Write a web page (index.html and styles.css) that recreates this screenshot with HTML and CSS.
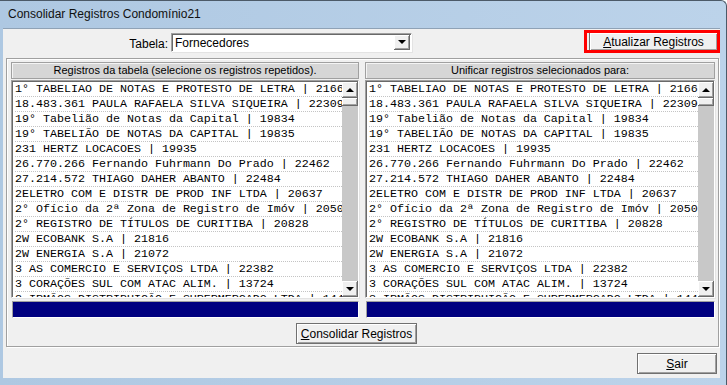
FILE: index.html
```html
<!DOCTYPE html>
<html lang="pt-BR">

<head>
    <meta charset="UTF-8">
    <title>Consolidar Registros Condomínio21</title>
    <link rel="stylesheet" href="styles.css">
</head>

<body>
    <div class="window">
        <div class="titlebar">Consolidar Registros Condomínio21</div>

        <div class="client">
            <!-- Table selection -->
            <div class="toolbar">
                <label class="field-label">Tabela:</label>
                <div class="combo">
                    <span class="combo-value">Fornecedores</span>
                    <span class="combo-btn"><span class="arrow-down"></span></span>
                </div>
                <button class="btn btn-refresh highlighted"><u>A</u>tualizar Registros</button>
            </div>

            <!-- Records -->
            <div class="group">
                <div class="panels">
                    <div class="panel">
                        <div class="panel-header">Registros da tabela (selecione os registros repetidos).</div>
                        <div class="listbox">
                            <ul class="rows">
                                <li>1° TABELIAO DE NOTAS E PROTESTO DE LETRA | 21668</li>
                                <li>18.483.361 PAULA RAFAELA SILVA SIQUEIRA | 22309</li>
                                <li>19° Tabelião de Notas da Capital | 19834</li>
                                <li>19° TABELIÃO DE NOTAS DA CAPITAL | 19835</li>
                                <li>231 HERTZ LOCACOES | 19935</li>
                                <li>26.770.266 Fernando Fuhrmann Do Prado | 22462</li>
                                <li>27.214.572 THIAGO DAHER ABANTO | 22484</li>
                                <li>2ELETRO COM E DISTR DE PROD INF LTDA | 20637</li>
                                <li>2° Ofício da 2ª Zona de Registro de Imóv | 20508</li>
                                <li>2° REGISTRO DE TÍTULOS DE CURITIBA | 20828</li>
                                <li>2W ECOBANK S.A | 21816</li>
                                <li>2W ENERGIA S.A | 21072</li>
                                <li>3 AS COMERCIO E SERVIÇOS LTDA | 22382</li>
                                <li>3 CORAÇÕES SUL COM ATAC ALIM. | 13724</li>
                                <li>3 IRMÃOS DISTRIBUIÇÃO E SUPERMERCADO LTDA | 14401</li>
                            </ul>
                            <div class="scrollbar">
                                <span class="sb-btn"><span class="arrow-up"></span></span>
                                <span class="sb-thumb"></span>
                                <span class="sb-track"></span>
                                <span class="sb-btn"><span class="arrow-down"></span></span>
                            </div>
                        </div>
                        <div class="progress"></div>
                    </div>

                    <div class="panel panel-right">
                        <div class="panel-header">Unificar registros selecionados para:</div>
                        <div class="listbox">
                            <ul class="rows">
                                <li>1° TABELIAO DE NOTAS E PROTESTO DE LETRA | 21668</li>
                                <li>18.483.361 PAULA RAFAELA SILVA SIQUEIRA | 22309</li>
                                <li>19° Tabelião de Notas da Capital | 19834</li>
                                <li>19° TABELIÃO DE NOTAS DA CAPITAL | 19835</li>
                                <li>231 HERTZ LOCACOES | 19935</li>
                                <li>26.770.266 Fernando Fuhrmann Do Prado | 22462</li>
                                <li>27.214.572 THIAGO DAHER ABANTO | 22484</li>
                                <li>2ELETRO COM E DISTR DE PROD INF LTDA | 20637</li>
                                <li>2° Ofício da 2ª Zona de Registro de Imóv | 20508</li>
                                <li>2° REGISTRO DE TÍTULOS DE CURITIBA | 20828</li>
                                <li>2W ECOBANK S.A | 21816</li>
                                <li>2W ENERGIA S.A | 21072</li>
                                <li>3 AS COMERCIO E SERVIÇOS LTDA | 22382</li>
                                <li>3 CORAÇÕES SUL COM ATAC ALIM. | 13724</li>
                                <li>3 IRMÃOS DISTRIBUIÇÃO E SUPERMERCADO LTDA | 14401</li>
                            </ul>
                            <div class="scrollbar">
                                <span class="sb-btn"><span class="arrow-up"></span></span>
                                <span class="sb-thumb"></span>
                                <span class="sb-track"></span>
                                <span class="sb-btn"><span class="arrow-down"></span></span>
                            </div>
                        </div>
                        <div class="progress"></div>
                    </div>
                </div>

                <div class="group-actions">
                    <button class="btn btn-consolidate"><u>C</u>onsolidar Registros</button>
                </div>
            </div>

            <!-- Footer -->
            <div class="footer">
                <button class="btn btn-exit"><u>S</u>air</button>
            </div>
        </div>
    </div>
</body>

</html>
```

FILE: styles.css
```css
/* Window frame */
body {
    margin: 0;
    font-family: "Liberation Sans", Arial, sans-serif;
    font-size: 12px;
    color: #000;
    background: #fff;
}

.window {
    width: 727px;
    height: 385px;
    display: flex;
    flex-direction: column;
    box-sizing: border-box;
    background: linear-gradient(to right, #aec8e2, #bcd3ea);
    border-top: 1px solid #4c5a68;
    border-right: 1px solid #4c5a68;
    border-top-right-radius: 6px;
    padding: 0 6px 7px 3px;
}

.titlebar {
    height: 27px;
    line-height: 27px;
    padding-left: 5px;
    font-size: 12px;
    color: #111;
}

.client {
    flex: 1;
    background: #f0f0f0;
    border-top: 1px solid #8fa2b6;
    display: flex;
    flex-direction: column;
}

/* Top toolbar */
.toolbar {
    height: 29px;
    display: flex;
    align-items: flex-start;
}

.field-label {
    width: 165px;
    padding-top: 8px;
    text-align: right;
}

.combo {
    margin: 4px 0 0 3px;
    width: 241px;
    height: 19px;
    box-sizing: border-box;
    display: flex;
    align-items: center;
    background: #fff;
    border-top: 1px solid #a0a0a0;
    border-left: 1px solid #a0a0a0;
    border-right: 1px solid #fff;
    border-bottom: 1px solid #fff;
    box-shadow: inset 1px 1px 0 #696969, 1px 1px 0 #e3e3e3;
}

.combo-value {
    flex: 1;
    padding-left: 3px;
}

.combo-btn {
    width: 16px;
    height: 15px;
    margin-right: 1px;
    box-sizing: border-box;
    display: flex;
    align-items: center;
    justify-content: center;
    background: #f0f0f0;
    border-right: 1px solid #696969;
    border-bottom: 1px solid #696969;
    box-shadow: inset 1px 1px 0 #fff, inset -1px -1px 0 #a0a0a0;
}

.arrow-down,
.arrow-up {
    width: 0;
    height: 0;
    border-left: 4px solid transparent;
    border-right: 4px solid transparent;
}

.arrow-down {
    border-top: 4px solid #000;
}

.arrow-up {
    border-bottom: 4px solid #000;
}

/* Buttons */
.btn {
    font-family: "Liberation Sans", Arial, sans-serif;
    font-size: 12px;
    color: #000;
    background: #f0f0f0;
    border: 1px solid #707070;
    box-shadow: inset 1px 1px 0 #fff, inset -1px -1px 0 #a0a0a0;
    padding: 0;
    cursor: pointer;
}

.btn u {
    text-decoration: underline;
}

.btn-refresh {
    margin: 3px 2px 0 auto;
    width: 129px;
    height: 19px;
}

.highlighted {
    position: relative;
}

.highlighted::after {
    content: "";
    position: absolute;
    left: -6px;
    top: -3px;
    right: -3px;
    bottom: -3px;
    border: 3px solid #ff0000;
}

/* Group box with the two lists */
.group {
    margin: 0 1px 0 3px;
    height: 289px;
    box-sizing: border-box;
    border: 1px solid #a0a0a0;
    box-shadow: inset 1px 1px 0 #fff, 1px 1px 0 #fff;
    padding: 3px 4px 0 4px;
    display: flex;
    flex-direction: column;
}

.panels {
    display: flex;
    gap: 6px;
}

.panel {
    width: 348px;
    display: flex;
    flex-direction: column;
}

.panel-right {
    width: 350px;
}

.panel-header {
    height: 17px;
    box-sizing: border-box;
    line-height: 15px;
    text-align: center;
    font-size: 11px;
    background: #d6d6d6;
    border: 1px solid #a0a0a0;
    box-shadow: inset 1px 1px 0 #f4f4f4;
}

.listbox {
    margin-top: 1px;
    height: 218px;
    box-sizing: border-box;
    display: flex;
    background: #fff;
    border-top: 1px solid #a0a0a0;
    border-left: 1px solid #a0a0a0;
    border-right: 1px solid #fff;
    border-bottom: 1px solid #fff;
    box-shadow: inset 1px 1px 0 #696969, 1px 1px 0 #e3e3e3;
    overflow: hidden;
}

.rows {
    flex: 1;
    margin: 0;
    padding: 1px 0 0 3px;
    list-style: none;
    overflow: hidden;
    font-family: "Liberation Mono", "Courier New", monospace;
    font-size: 11.67px;
}

.rows li {
    height: 14px;
    line-height: 15px;
    white-space: nowrap;
    border-bottom: 1px dotted #c4c4c4;
}

/* Classic scrollbar */
.scrollbar {
    width: 16px;
    margin: 1px 0 0 0;
    display: flex;
    flex-direction: column;
}

.sb-btn,
.sb-thumb {
    height: 16px;
    box-sizing: border-box;
    display: flex;
    align-items: center;
    justify-content: center;
    background: #f0f0f0;
    border-right: 1px solid #696969;
    border-bottom: 1px solid #696969;
    box-shadow: inset 1px 1px 0 #fff, inset -1px -1px 0 #a0a0a0;
}

.sb-thumb {
    height: 8px;
}

.sb-track {
    flex: 1;
    background: #c8c8c8;
}

.progress {
    margin: 3px 0 0 1px;
    height: 17px;
    box-sizing: border-box;
    background: #000080;
    border-top: 1px solid #a0a0a0;
    border-left: 1px solid #a0a0a0;
    border-right: 1px solid #fff;
    border-bottom: 1px solid #fff;
}

.group-actions {
    margin-top: 5px;
    padding-left: 285px;
}

.btn-consolidate {
    width: 121px;
    height: 21px;
}

/* Footer */
.footer {
    margin-top: 6px;
    display: flex;
    justify-content: flex-end;
    padding-right: 3px;
}

.btn-exit {
    width: 80px;
    height: 21px;
}
```
